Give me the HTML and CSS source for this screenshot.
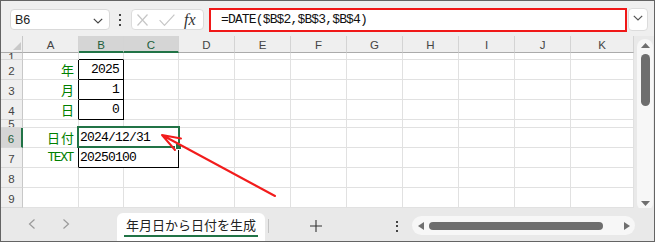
FILE: index.html
```html
<!DOCTYPE html>
<html lang="ja">
<head>
<meta charset="utf-8">
<title>Excel</title>
<link rel="stylesheet" href="styles.css">
</head>
<body>
<div class="app">
  <div class="fbar">
    <div class="namebox"><span>B6</span><svg class="nbchev" width="10" height="6" viewBox="0 0 10 6"><polyline points="0.8,0.8 5,5 9.2,0.8" fill="none" stroke="#444" stroke-width="1.2"/></svg></div>
    <div class="vdots"><i></i><i></i><i></i></div>
    <div class="fxbox">
      <svg class="ic-x" width="11" height="12" viewBox="0 0 11 12"><path d="M0.5,0.5 L10.5,11.5 M10.5,0.5 L0.5,11.5" stroke="#c6c6c6" stroke-width="1.2" fill="none"/></svg>
      <svg class="ic-ok" width="16" height="12" viewBox="0 0 16 12"><polyline points="0.6,6.2 5.5,11.3 15.4,0.6" stroke="#c6c6c6" stroke-width="1.2" fill="none"/></svg>
      <span class="fx">fx</span>
    </div>
    <div class="formula">=DATE($B$2,$B$3,$B$4)</div>
    <div class="fdrop"><svg width="10" height="6" viewBox="0 0 10 6"><polyline points="0.8,0.8 5,5 9.2,0.8" fill="none" stroke="#555" stroke-width="1.2"/></svg></div>
  </div>

  <div class="main">
    <div class="sheet">
      <!-- header row -->
      <div class="c corner"><svg width="8" height="8" viewBox="0 0 8 8"><polygon points="8,0 8,8 0,8" fill="#c9c9c9"/></svg></div>
      <div class="c h">A</div>
      <div class="c h hs">B</div>
      <div class="c h hs">C</div>
      <div class="c h">D</div>
      <div class="c h">E</div>
      <div class="c h">F</div>
      <div class="c h">G</div>
      <div class="c h">H</div>
      <div class="c h">I</div>
      <div class="c h">J</div>
      <div class="c h">K</div>

      <!-- row 1 -->
      <div class="c r short"><span>1</span></div>
      <div class="c"></div>
      <div class="c bb"></div>
      <div class="c"></div><div class="c"></div><div class="c"></div><div class="c"></div><div class="c"></div><div class="c"></div><div class="c"></div><div class="c"></div><div class="c"></div>

      <!-- row 2 -->
      <div class="c r"><span>2</span></div>
      <div class="c lbl br">年</div>
      <div class="c num br bb">2025</div>
      <div class="c"></div><div class="c"></div><div class="c"></div><div class="c"></div><div class="c"></div><div class="c"></div><div class="c"></div><div class="c"></div><div class="c"></div>

      <!-- row 3 -->
      <div class="c r"><span>3</span></div>
      <div class="c lbl br">月</div>
      <div class="c num br bb">1</div>
      <div class="c"></div><div class="c"></div><div class="c"></div><div class="c"></div><div class="c"></div><div class="c"></div><div class="c"></div><div class="c"></div><div class="c"></div>

      <!-- row 4 -->
      <div class="c r"><span>4</span></div>
      <div class="c lbl br">日</div>
      <div class="c num br bb">0</div>
      <div class="c"></div><div class="c"></div><div class="c"></div><div class="c"></div><div class="c"></div><div class="c"></div><div class="c"></div><div class="c"></div><div class="c"></div>

      <!-- row 5 -->
      <div class="c r short"><span>5</span></div>
      <div class="c"></div><div class="c"></div><div class="c"></div><div class="c"></div><div class="c"></div><div class="c"></div><div class="c"></div><div class="c"></div><div class="c"></div><div class="c"></div><div class="c"></div>

      <!-- row 6 -->
      <div class="c r rs"><span>6</span></div>
      <div class="c lbl lbl2 br">日付</div>
      <div class="c txt span2 br bb sel">2024/12/31<span class="handle"></span></div>
      <div class="c"></div><div class="c"></div><div class="c"></div><div class="c"></div><div class="c"></div><div class="c"></div><div class="c"></div><div class="c"></div>

      <!-- row 7 -->
      <div class="c r"><span>7</span></div>
      <div class="c lbl lbltext br">TEXT</div>
      <div class="c txt span2 br bb">20250100</div>
      <div class="c"></div><div class="c"></div><div class="c"></div><div class="c"></div><div class="c"></div><div class="c"></div><div class="c"></div><div class="c"></div>

      <!-- row 8 -->
      <div class="c r"><span>8</span></div>
      <div class="c"></div><div class="c"></div><div class="c"></div><div class="c"></div><div class="c"></div><div class="c"></div><div class="c"></div><div class="c"></div><div class="c"></div><div class="c"></div><div class="c"></div>

      <!-- row 9 -->
      <div class="c r"><span>9</span></div>
      <div class="c"></div><div class="c"></div><div class="c"></div><div class="c"></div><div class="c"></div><div class="c"></div><div class="c"></div><div class="c"></div><div class="c"></div><div class="c"></div><div class="c"></div>
    </div>

    <div class="vscroll">
      <div class="vtrack">
        <svg width="9" height="5" viewBox="0 0 9 5"><polygon points="4.5,0 9,5 0,5" fill="#6f6f6f"/></svg>
        <div class="vthumb"></div>
        <svg class="vdown" width="9" height="5" viewBox="0 0 9 5"><polygon points="0,0 9,0 4.5,5" fill="#6f6f6f"/></svg>
      </div>
    </div>
  </div>

  <div class="bottom">
    <svg class="navl" width="8" height="10" viewBox="0 0 8 10"><polyline points="6.5,0.5 1.5,5 6.5,9.5" fill="none" stroke="#9a9a9a" stroke-width="1.2"/></svg>
    <svg class="navr" width="8" height="10" viewBox="0 0 8 10"><polyline points="1.5,0.5 6.5,5 1.5,9.5" fill="none" stroke="#9a9a9a" stroke-width="1.2"/></svg>
    <div class="tab"><span class="tabname">年月日から日付を生成</span></div>
    <div class="sep"></div>
    <svg class="plus" width="12" height="12" viewBox="0 0 12 12"><path d="M6,0 V12 M0,6 H12" stroke="#333" stroke-width="1.1" fill="none"/></svg>
    <div class="hdots"><i></i><i></i><i></i></div>
    <div class="hscroll">
      <svg class="hl" width="6" height="8" viewBox="0 0 6 8"><polygon points="6,0 6,8 0,4" fill="#6f6f6f"/></svg>
      <div class="hthumb"></div>
      <svg class="hr" width="6" height="8" viewBox="0 0 6 8"><polygon points="0,0 6,4 0,8" fill="#6f6f6f"/></svg>
    </div>
  </div>

  <svg class="arrow" width="655" height="242" viewBox="0 0 655 242">
    <path d="M275,196 L162,135 M162,135 L181,138.5 M162,135 L175,150" stroke="#f21c1c" stroke-width="2" stroke-linecap="round" fill="none"/>
  </svg>
</div>
</body>
</html>
```

FILE: styles.css
```css
* { box-sizing: border-box; margin: 0; padding: 0; }
html, body { width: 655px; height: 242px; overflow: hidden; background: #efefef; }

.app {
  position: relative;
  width: 655px;
  height: 242px;
  border: 1px solid #646464;
  background: #efefef;
  display: flex;
  flex-direction: column;
  font-family: "Liberation Sans", Arial, sans-serif;
}

/* formula bar */
.fbar { height: 35px; padding-top: 2px; display: flex; align-items: center; flex: none; }
.namebox {
  margin-left: 9px; width: 100px; height: 21px;
  background: #fff; border: 1px solid #d9d9d9; border-radius: 4px;
  display: flex; align-items: center; justify-content: space-between;
  padding: 0 6px 0 4px; font-size: 12.5px; color: #222;
}
.nbchev { margin-top: 2px; }
.vdots { margin-left: 8px; width: 4px; height: 12px; display: flex; flex-direction: column; justify-content: space-between; align-items: center; }
.vdots i { display: block; width: 2px; height: 2px; background: #444; }
.fxbox {
  margin-left: 9px; width: 73px; height: 21px;
  background: #fff; border: 1px solid #dcdcdc; border-radius: 4px;
  display: flex; align-items: center; padding-left: 5px;
}
.ic-ok { margin-left: 11px; }
.fx { margin-left: 9px; font-family: "Liberation Serif", serif; font-style: italic; font-size: 16px; color: #333; line-height: 16px; }
.formula {
  margin-left: 5px; width: 418px; height: 24px;
  border: 2px solid #f01818; background: #fff;
  padding-left: 10px;
  font-family: "Liberation Mono", monospace; font-size: 13px; letter-spacing: -0.85px; line-height: 20px; color: #111;
}
.fdrop {
  margin-left: 1px; width: 20px; height: 23px;
  background: #fff; border: 1px solid #dcdcdc; border-radius: 4px;
  display: flex; justify-content: center; align-items: flex-start; padding-top: 6px;
}

/* sheet */
.main { display: flex; height: 172px; flex: none; }
.sheet {
  width: 633px;
  display: grid;
  grid-template-columns: 22px 56px 45px 55px repeat(7, 56px) 63px;
  grid-template-rows: 17px 7px 20px 20px 20px 8px 20px 20px 20px 20px;
  background: #fff;
}
.c {
  border-right: 1px solid #e1e1e1;
  border-bottom: 1px solid #e1e1e1;
  display: flex; align-items: center;
  white-space: nowrap;
  font-family: "Liberation Mono", monospace; font-size: 13px; letter-spacing: -0.8px; color: #000;
}
.corner { background: #efefef; border-right: 1px solid #c8c8c8; border-bottom: 1px solid #ababab; justify-content: flex-end; align-items: flex-end; padding: 0 1px 2px 0; }
.h {
  background: #efefef; border-right: 1px solid #d4d4d4; border-bottom: 1px solid #ababab;
  justify-content: center; padding-top: 1px; letter-spacing: 0;
  font-family: "Liberation Sans", Arial, sans-serif; font-size: 11.5px; color: #444;
}
.hs { background: #d5d5d5; border-bottom: 2px solid #217346; color: #1d5e3a; padding-top: 2px; }
.r {
  background: #efefef; border-right: 1px solid #c8c8c8; border-bottom: 1px solid #d8d8d8;
  justify-content: center; overflow: hidden; padding-top: 2px; letter-spacing: 0;
  font-family: "Liberation Sans", Arial, sans-serif; font-size: 11.5px; color: #444;
}
.r.short { align-items: flex-start; padding-top: 0; line-height: 8px; }
.rs { background: #d5d5d5; border-right: 2px solid #217346; color: #1d5e3a; }

.bb { border-bottom-color: #000; }
.br { border-right-color: #000; }
.span2 { grid-column: span 2; }
.num { justify-content: flex-end; padding-right: 4px; }
.txt { padding-left: 1px; }
.lbl {
  justify-content: flex-end; padding-right: 4px; color: #008000; letter-spacing: 0;
  font-family: "Noto Sans CJK JP", sans-serif; font-size: 13px;
}
.lbl2 { letter-spacing: 1px; padding-right: 3px; }
.lbltext { font-family: "Liberation Mono", monospace; font-size: 13px; letter-spacing: -1.4px; padding-right: 5px; }

.sel { position: relative; z-index: 2; }
.sel::after {
  content: ""; position: absolute;
  top: -2px; left: -2px; right: -2px; bottom: -1px;
  border: 2px solid #217346;
}
.handle {
  position: absolute; right: -4px; bottom: -3px;
  width: 7px; height: 7px; background: #217346; border: 1px solid #fff; z-index: 3;
}

/* vertical scrollbar */
.vscroll { width: 20px; background: #e9e9e9; overflow: hidden; }
.vtrack {
  margin: 3px 0 0 3px; width: 16px; height: 172px;
  background: #f7f7f7; border-radius: 8px;
  display: flex; flex-direction: column; align-items: center;
  padding-top: 4px;
}
.vthumb { margin-top: 6px; width: 9px; height: 52px; background: #6e6e6e; border-radius: 5px; }
.vdown { margin-top: 95px; }

/* bottom bar */
.bottom { height: 33px; flex: none; display: flex; align-items: center; background: #e9e9e9; }
.navl { margin-left: 27px; margin-top: -1px; }
.navr { margin-left: 26px; margin-top: -1px; }
.tab {
  align-self: flex-end; margin-left: 47px; width: 148px; height: 28px;
  background: #fff; border-radius: 6px 6px 0 0;
  display: flex; justify-content: center; padding-top: 2px;
}
.tabname {
  font-family: "Noto Sans CJK JP", sans-serif; font-size: 13px; color: #222;
  line-height: 19px; padding: 0 2px; border-bottom: 2px solid #217346; height: 22px;
}
.sep { margin-left: 3px; width: 1px; height: 14px; background: #c4c4c4; margin-top: 2px; }
.plus { margin-left: 41px; margin-top: 3px; }
.hdots { margin-left: 73px; margin-top: 3px; width: 3px; height: 11px; display: flex; flex-direction: column; justify-content: space-between; align-items: center; }
.hdots i { display: block; width: 2px; height: 2px; background: #444; }
.hscroll {
  margin-left: 14px; width: 223px; height: 19px; margin-top: 2px;
  background: #f7f7f7; border-radius: 10px;
  display: flex; align-items: center; padding-left: 6px;
}
.hthumb { margin-left: 5px; width: 174px; height: 8px; background: #6e6e6e; border-radius: 4px; }
.hr { margin-left: 21px; }

.arrow { position: absolute; left: -1px; top: -1px; pointer-events: none; z-index: 5; }
```
